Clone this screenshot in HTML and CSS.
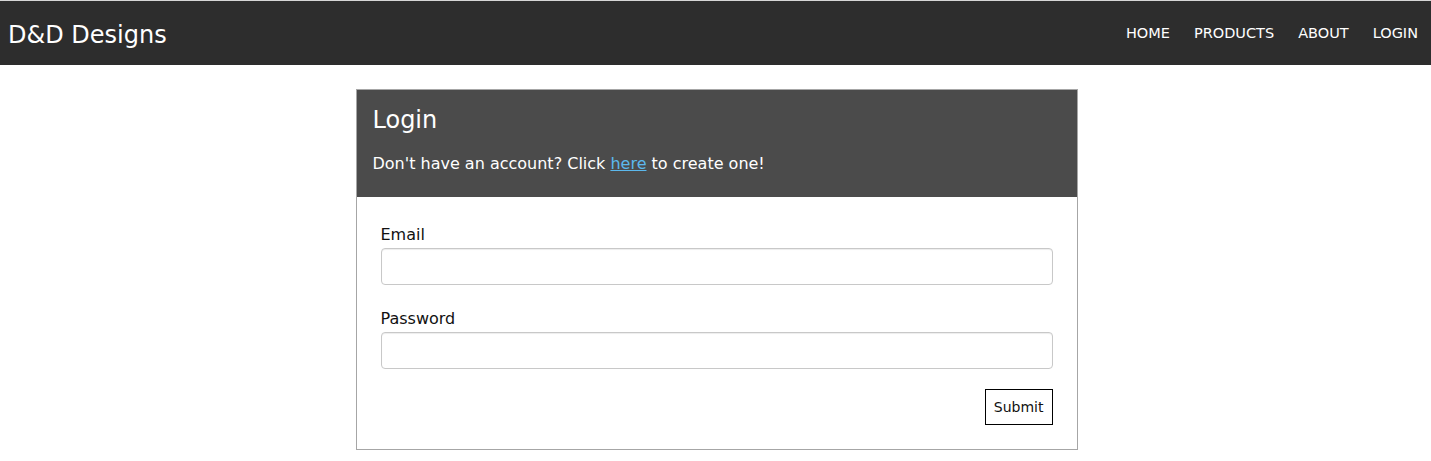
FILE: index.html
```html
<!DOCTYPE html>
<html lang="en">
<head>
<meta charset="utf-8">
<title>D&amp;D Designs - Login</title>
<link rel="stylesheet" href="styles.css">
</head>
<body>
<nav class="navbar">
  <a class="brand" href="#">D&amp;D Designs</a>
  <ul class="nav-links">
    <li><a href="#">HOME</a></li>
    <li><a href="#">PRODUCTS</a></li>
    <li><a href="#">ABOUT</a></li>
    <li><a href="#">LOGIN</a></li>
  </ul>
</nav>
<main class="page">
  <section class="card">
    <header class="card-header">
      <h2 class="card-title">Login</h2>
      <p class="card-sub">Don't have an account? Click <a href="#">here</a> to create one!</p>
    </header>
    <form class="card-body">
      <div class="form-group">
        <label for="email">Email</label>
        <input id="email" type="email" class="form-control">
      </div>
      <div class="form-group">
        <label for="password">Password</label>
        <input id="password" type="password" class="form-control">
      </div>
      <div class="actions">
        <button type="submit" class="btn">Submit</button>
      </div>
    </form>
  </section>
</main>
</body>
</html>
```
FILE: styles.css
```css
* { box-sizing: border-box; }
html, body { margin: 0; padding: 0; background: #fff; }
body {
  font-family: "DejaVu Sans", sans-serif;
  color: #111;
  border-top: 1px solid #d6d6d6;
}
.navbar {
  height: 64px;
  background: #2d2d2d;
  display: flex;
  align-items: center;
  justify-content: space-between;
  padding: 0 1px 0 8px;
}
.brand {
  color: #fff;
  font-size: 24px;
  line-height: 29px;
  text-decoration: none;
  padding-top: 4px;
}
.nav-links {
  list-style: none;
  margin: 0;
  padding: 0;
  display: flex;
}
.nav-links a {
  display: block;
  color: #fff;
  text-decoration: none;
  font-size: 14.5px;
  line-height: 17px;
  padding: 0 12px;
}
.page {
  padding: 24px 0 0 2px;
}
.card {
  width: 722px;
  margin: 0 auto;
  border: 1px solid #a6a6a6;
}
.card-header {
  background: #4b4b4b;
  color: #fff;
  padding: 16px 16px 21px;
}
.card-title {
  margin: 0 0 17px;
  font-size: 24px;
  line-height: 29px;
  font-weight: normal;
}
.card-sub {
  margin: 0;
  font-size: 16px;
  line-height: 24px;
}
.card-sub a { color: #5cb8ec; }
.card-body {
  padding: 26px 24px 24px;
  margin: 0;
}
.form-group + .form-group { margin-top: 22px; }
.form-group label {
  display: block;
  font-size: 16px;
  line-height: 24px;
  margin-bottom: 1px;
  color: #111;
}
.form-control {
  display: block;
  width: 100%;
  height: 37px;
  border: 1px solid #c8c8c8;
  border-radius: 4px;
  box-shadow: inset 0 1px 1px rgba(0,0,0,.075);
  padding: 6px 12px;
  font: inherit;
  background: #fff;
}
.actions {
  display: flex;
  justify-content: flex-end;
  margin-top: 20px;
}
.btn {
  height: 36px;
  padding: 0 8px;
  border: 1px solid #000;
  background: #fff;
  color: #111;
  font-family: "DejaVu Sans", sans-serif;
  font-size: 14px;
  border-radius: 0;
}
```
